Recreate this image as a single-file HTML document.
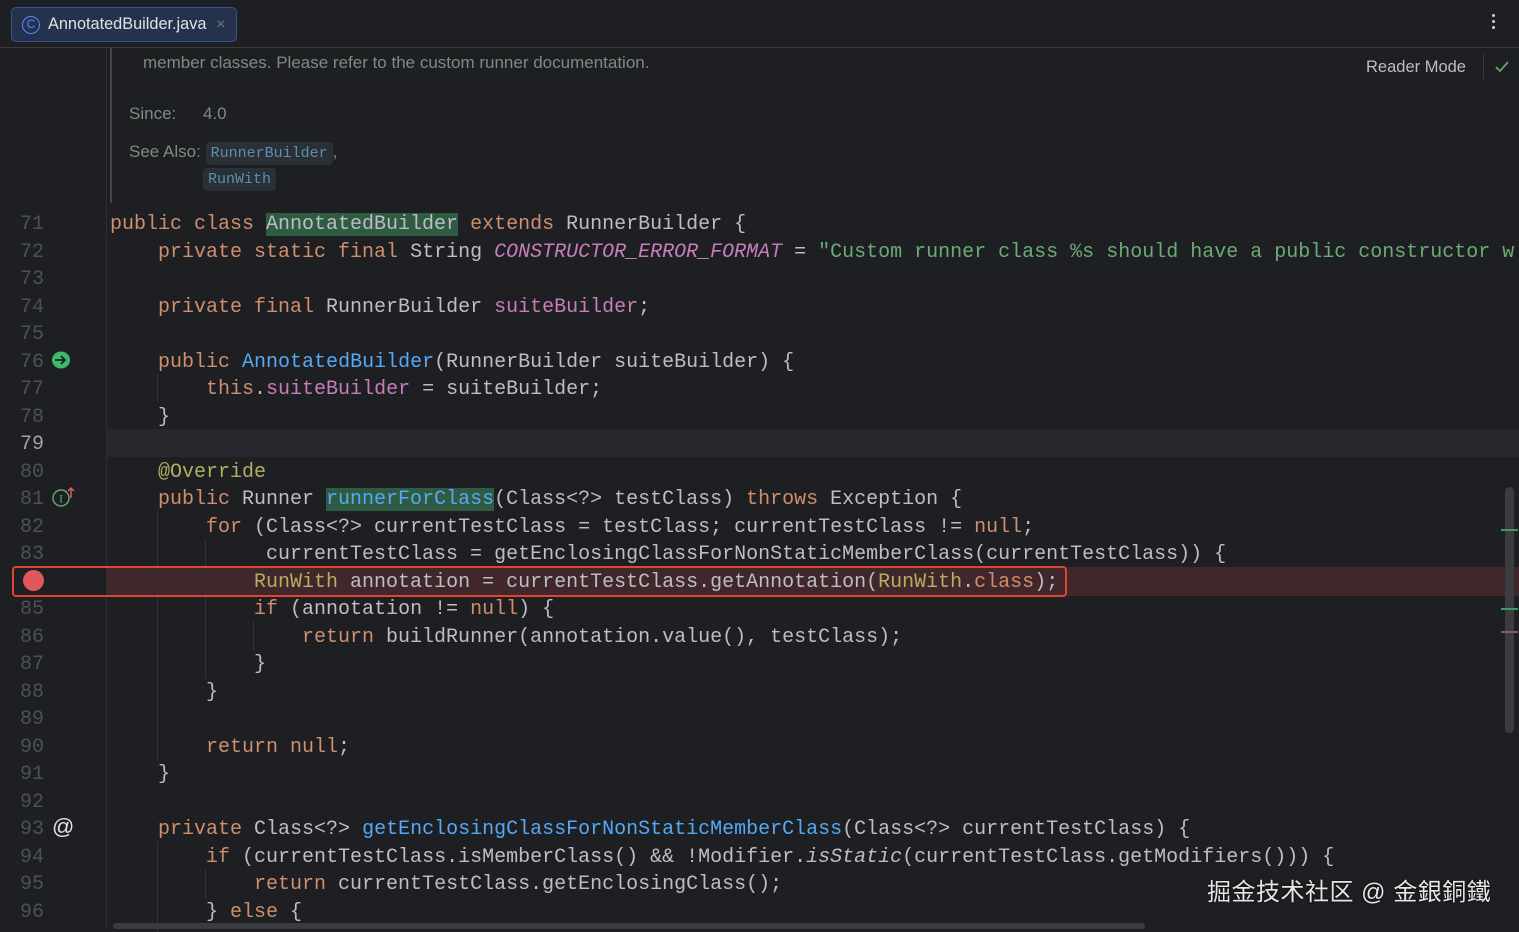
<!DOCTYPE html>
<html><head><meta charset="utf-8"><style>
*{margin:0;padding:0;box-sizing:border-box}
body{width:1519px;height:929px;background:#1e1f22;overflow:hidden;position:relative;font-family:"Liberation Sans",sans-serif}
.tabbar{position:absolute;left:0;top:0;width:1519px;height:48px;border-bottom:1px solid #393b40;background:#1e1f22}
.tab{position:absolute;left:11px;top:7px;width:226px;height:35px;background:#25324d;border:1px solid #35538f;border-radius:5px;color:#dfe1e5;font-size:16.3px;line-height:33px;padding-left:36px}
.tab .ic{position:absolute;left:10px;top:8px;width:18px;height:18px;border:1.5px solid #548af7;border-radius:50%;color:#548af7;font-size:12px;line-height:15px;text-align:center}
.tab .x{position:absolute;left:204px;top:0;color:#6f737a;font-size:16px}
.dots{position:absolute;left:1492px;top:14px;width:4px}
.dots i{display:block;width:3px;height:3px;background:#ced0d6;border-radius:50%;margin-bottom:3px}
.gutterline{position:absolute;left:106px;top:48px;width:1px;height:881px;background:#2b2d30}
.doc{position:absolute;left:110px;top:48px;width:2px;height:155px;background:#43454a}
.doct{position:absolute;color:#7e8b7f;font-size:17px}
.chip{display:inline-block;background:#2b2f36;border-radius:4px;padding:0 5px;font-family:"Liberation Mono",monospace;color:#5a8fb0;font-size:15px;line-height:23px}
.rm{position:absolute;left:1366px;top:58px;color:#bcbec4;font-size:16.5px}
.rsep{position:absolute;left:1483px;top:53px;width:1px;height:26px;background:#393b40}
.row{position:absolute;left:0;width:1519px;height:27.5px;font-family:"Liberation Mono",monospace;font-size:20px;line-height:27.5px;white-space:pre;color:#bcbec4}
.ln{position:absolute;left:0;width:44px;text-align:right;color:#4b5059}
.code{position:absolute;left:110px}
.k{color:#cf8e6d}.f{color:#c77dbb}.m{color:#56a8f5}.a{color:#b3ae60}.s{color:#6aab73}.i{font-style:italic}
.hl{background:#2f5b43}
.guide{position:absolute;width:1px;background:#313338}
</style></head><body>
<div class="tabbar">
<div class="tab"><span class="ic">C</span>AnnotatedBuilder.java<span class="x">×</span></div>
<div class="dots"><i></i><i></i><i></i></div>
</div>
<div class="gutterline"></div>
<div class="doc"></div>
<div class="doct" style="left:143px;top:53px">member classes. Please refer to the custom runner documentation.</div>
<div class="doct" style="left:129px;top:104px">Since:</div>
<div class="doct" style="left:203px;top:104px">4.0</div>
<div class="doct" style="left:129px;top:142px">See Also: <span class="chip">RunnerBuilder</span>,</div>
<div class="doct" style="left:203px;top:168px"><span class="chip">RunWith</span></div>
<div class="rm">Reader Mode</div>
<div class="rsep"></div>
<svg style="position:absolute;left:1494px;top:60px" width="16" height="14"><path d="M2 7 L6 11 L14 2" stroke="#5fa86c" stroke-width="1.8" fill="none"/></svg>

<div style="position:absolute;left:107px;top:429px;width:1412px;height:27.5px;background:#26282e"></div>
<div style="position:absolute;left:107px;top:567px;width:1412px;height:29px;background:#40272c"></div>

<div class="guide" style="left:157px;top:374px;height:28px"></div>
<div class="guide" style="left:157px;top:511px;height:250px"></div>
<div class="guide" style="left:205px;top:539px;height:140px"></div>
<div class="guide" style="left:253px;top:621px;height:30px"></div>
<div class="guide" style="left:157px;top:842px;height:90px"></div>
<div class="guide" style="left:205px;top:869px;height:30px"></div>

<div class="row" style="top:211px"><span class="ln">71</span><span class="code"><span class="k">public class </span><span class="hl">AnnotatedBuilder</span> <span class="k">extends</span> RunnerBuilder {</span></div>
<div class="row" style="top:238.5px"><span class="ln">72</span><span class="code">    <span class="k">private static final</span> String <span class="f i">CONSTRUCTOR_ERROR_FORMAT</span> = <span class="s">"Custom runner class %s should have a public constructor w:</span></span></div>
<div class="row" style="top:266px"><span class="ln">73</span></div>
<div class="row" style="top:293.5px"><span class="ln">74</span><span class="code">    <span class="k">private final</span> RunnerBuilder <span class="f">suiteBuilder</span>;</span></div>
<div class="row" style="top:321px"><span class="ln">75</span></div>
<div class="row" style="top:348.5px"><span class="ln">76</span><span class="code">    <span class="k">public</span> <span class="m">AnnotatedBuilder</span>(RunnerBuilder suiteBuilder) {</span></div>
<div class="row" style="top:376px"><span class="ln">77</span><span class="code">        <span class="k">this</span>.<span class="f">suiteBuilder</span> = suiteBuilder;</span></div>
<div class="row" style="top:403.5px"><span class="ln">78</span><span class="code">    }</span></div>
<div class="row" style="top:431px"><span class="ln" style="color:#a1a3ab">79</span></div>
<div class="row" style="top:458.5px"><span class="ln">80</span><span class="code">    <span class="a">@Override</span></span></div>
<div class="row" style="top:486px"><span class="ln">81</span><span class="code">    <span class="k">public</span> Runner <span class="m hl">runnerForClass</span>(Class&lt;?&gt; testClass) <span class="k">throws</span> Exception {</span></div>
<div class="row" style="top:513.5px"><span class="ln">82</span><span class="code">        <span class="k">for</span> (Class&lt;?&gt; currentTestClass = testClass; currentTestClass != <span class="k">null</span>;</span></div>
<div class="row" style="top:541px"><span class="ln">83</span><span class="code">             currentTestClass = getEnclosingClassForNonStaticMemberClass(currentTestClass)) {</span></div>
<div class="row" style="top:568.5px"><span class="code">            <span class="a">RunWith</span> annotation = currentTestClass.getAnnotation(<span class="a">RunWith</span>.<span class="k">class</span>);</span></div>
<div class="row" style="top:596px"><span class="ln">85</span><span class="code">            <span class="k">if</span> (annotation != <span class="k">null</span>) {</span></div>
<div class="row" style="top:623.5px"><span class="ln">86</span><span class="code">                <span class="k">return</span> buildRunner(annotation.value(), testClass);</span></div>
<div class="row" style="top:651px"><span class="ln">87</span><span class="code">            }</span></div>
<div class="row" style="top:678.5px"><span class="ln">88</span><span class="code">        }</span></div>
<div class="row" style="top:706px"><span class="ln">89</span></div>
<div class="row" style="top:733.5px"><span class="ln">90</span><span class="code">        <span class="k">return null</span>;</span></div>
<div class="row" style="top:761px"><span class="ln">91</span><span class="code">    }</span></div>
<div class="row" style="top:788.5px"><span class="ln">92</span></div>
<div class="row" style="top:816px"><span class="ln">93</span><span class="code">    <span class="k">private</span> Class&lt;?&gt; <span class="m">getEnclosingClassForNonStaticMemberClass</span>(Class&lt;?&gt; currentTestClass) {</span></div>
<div class="row" style="top:843.5px"><span class="ln">94</span><span class="code">        <span class="k">if</span> (currentTestClass.isMemberClass() &amp;&amp; !Modifier.<span class="i">isStatic</span>(currentTestClass.getModifiers())) {</span></div>
<div class="row" style="top:871px"><span class="ln">95</span><span class="code">            <span class="k">return</span> currentTestClass.getEnclosingClass();</span></div>
<div class="row" style="top:898.5px"><span class="ln">96</span><span class="code">        } <span class="k">else</span> {</span></div>

<div style="position:absolute;left:12px;top:566px;width:1055px;height:31px;border:2.5px solid #e0452f;border-radius:4px"></div>
<div style="position:absolute;left:23px;top:570px;width:21px;height:21px;border-radius:50%;background:#e0585c"></div>
<svg style="position:absolute;left:51px;top:351px" width="20" height="18"><ellipse cx="10" cy="9" rx="9" ry="8.5" fill="#3cba6a"/><path d="M4 9 H14 M10 5 L14 9 L10 13" stroke="#1e1f22" stroke-width="1.8" fill="none"/></svg>
<svg style="position:absolute;left:51px;top:486px" width="24" height="22"><circle cx="10" cy="12" r="8" stroke="#5fa86c" stroke-width="1.5" fill="none"/><text x="10" y="16.5" fill="#5fa86c" font-size="12" font-family="Liberation Serif" text-anchor="middle">I</text><path d="M20 12 V2 M17 5 L20 2 L23 5" stroke="#e0585c" stroke-width="1.5" fill="none"/></svg>
<div style="position:absolute;left:52px;top:814px;color:#dfe1e5;font-size:22px;font-family:'Liberation Sans',sans-serif">@</div>

<div style="position:absolute;left:1505px;top:487px;width:9px;height:246px;background:#3a3c40;border-radius:5px"></div>
<div style="position:absolute;left:1501px;top:529px;width:17px;height:2px;background:#3c9a6c"></div>
<div style="position:absolute;left:1501px;top:608px;width:17px;height:2px;background:#3c9a6c"></div>
<div style="position:absolute;left:1501px;top:631px;width:17px;height:2px;background:#8a5a66"></div>
<div style="position:absolute;left:113px;top:923px;width:1032px;height:6px;background:#3a3c40;border-radius:3px"></div>
<div style="position:absolute;left:1207px;top:872px;color:#e6e6e6;font-size:24px;letter-spacing:0.5px;font-family:'Liberation Sans','Noto Sans CJK SC',sans-serif;text-shadow:0 0 2px #000">掘金技术社区 @ 金銀銅鐵</div>
</body></html>
